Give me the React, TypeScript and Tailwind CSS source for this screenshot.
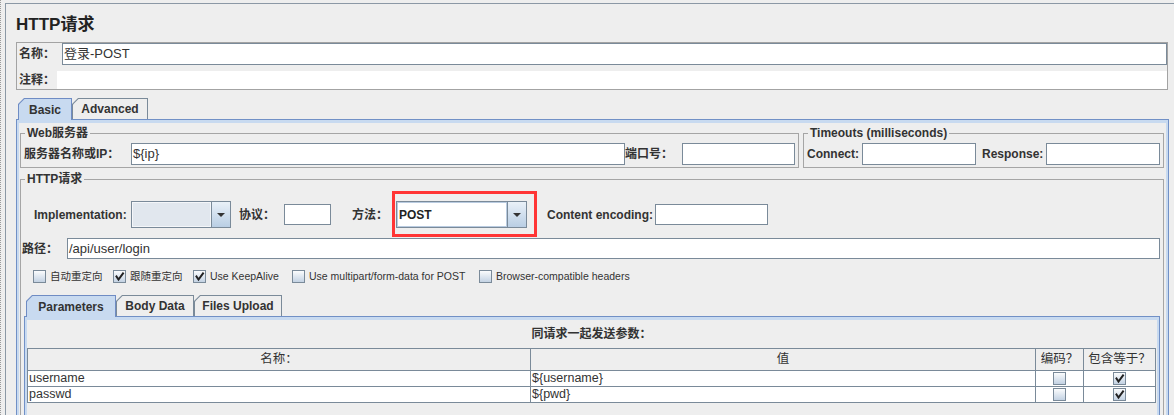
import React from "react";

function Check({ checked }: { checked?: boolean }) {
  return (
    <div className="w-[13px] h-[13px] shrink-0 border border-[#7a8a99] bg-linear-to-b from-[#fbfcfd] to-[#c3d2e3] flex items-center justify-center">
      {checked ? (
        <svg width="11" height="11" viewBox="0 0 11 11">
          <path d="M2.5 5.5 L4.5 8.5 L9 2.5" stroke="#222" strokeWidth="2" fill="none" strokeLinecap="square" />
        </svg>
      ) : null}
    </div>
  );
}

function Arrow() {
  return (
    <div className="w-[19px] shrink-0 border-l border-[#7a8a99] bg-linear-to-b from-[#eaf1f8] to-[#b9cee4] flex items-center justify-center">
      <svg width="8" height="4" viewBox="0 0 8 4">
        <polygon points="0,0 8,0 4,4" fill="#333" />
      </svg>
    </div>
  );
}

function Tab({ label, width, selected }: { label: string; width: string; selected?: boolean }) {
  return (
    <div
      className={
        selected
          ? `relative z-[1] -mb-px h-[22px] bg-[#6f8cc4] pt-px px-px [clip-path:polygon(6px_0,100%_0,100%_100%,0_100%,0_6px)] ${width}`
          : `h-[21px] bg-[#7a8a99] pt-px px-px [clip-path:polygon(6px_0,100%_0,100%_100%,0_100%,0_6px)] ${width}`
      }
    >
      <div
        className={
          selected
            ? "h-full bg-[#c8daf0] flex items-center justify-center font-bold text-[12px] text-[#333] [clip-path:polygon(5.5px_0,100%_0,100%_100%,0_100%,0_5.5px)]"
            : "h-full bg-[#eeeeee] flex items-center justify-center font-bold text-[12px] text-[#333] [clip-path:polygon(5.5px_0,100%_0,100%_100%,0_100%,0_5.5px)]"
        }
      >
        {label}
      </div>
    </div>
  );
}

function CheckItem({ label, checked, width }: { label: string; checked?: boolean; width: string }) {
  return (
    <div className={`flex items-center gap-[4px] ${width}`}>
      <Check checked={checked} />
      <span className="text-[10.5px] text-[#333] whitespace-nowrap leading-[13px]">{label}</span>
    </div>
  );
}

export default function App() {
  return (
    <div className="w-[1174px] h-[415px] overflow-hidden bg-[#eeeeee] flex [font-family:'Liberation_Sans','Noto_Sans_CJK_SC',sans-serif] text-[#333]">
      {/* dotted edge */}
      <div className="w-[5px] h-full border-l border-dotted border-[#9a9a9a]" />
      {/* main panel */}
      <div className="flex-1 mt-[3px] border-t border-l border-[#8b98a5] pl-[10px] pr-[5px] flex flex-col">
        <div className="mt-[7px] h-[28px] leading-[28px] text-[17px] font-bold text-[#222]">HTTP请求</div>

        {/* name / comment box */}
        <div className="mt-[3px] mr-[1px] border border-[#a3a3a3] flex flex-col">
          <div className="h-[22px] flex items-center">
            <div className="w-[45px] pl-[2px] font-bold text-[12px]">名称：</div>
            <div className="flex-1 h-[22px] bg-white border border-[#7a8a99] flex items-center px-[1px] text-[13px] text-[#333]">
              登录-POST
            </div>
          </div>
          <div className="mt-[6px] h-[18px] flex items-center">
            <div className="w-[40px] pl-[2px] font-bold text-[12px]">注释：</div>
            <div className="flex-1 h-[18px] bg-white" />
          </div>
        </div>

        {/* main tabs */}
        <div className="mt-[8px] pl-[2px] flex items-end">
          <Tab label="Basic" width="w-[54px]" selected />
          <Tab label="Advanced" width="w-[76px]" />
        </div>
        <div className="flex-1 border-t border-x border-[#7190c6]">
          <div className="h-full border-t-[3px] border-x-[2px] border-[#c8daf0] pl-[1px] pr-[2px] flex flex-col">
            {/* top fieldsets */}
            <div className="mt-[2px] flex gap-[4px]">
              <fieldset className="flex-1 border border-[#a5a5a5] pl-[3px] pr-[3px] pb-[2px]">
                <legend className="ml-[1px] px-[2px] h-[16px] leading-[16px] font-bold text-[12px]">Web服务器</legend>
                <div className="mt-[2px] h-[22px] flex items-center">
                  <div className="w-[107px] font-bold text-[12px] whitespace-nowrap">服务器名称或IP：</div>
                  <div className="flex-1 h-[22px] bg-white border border-[#7a8a99] flex items-center px-[1px] text-[13px] text-[#333]">
                    {"${ip}"}
                  </div>
                  <div className="w-[57px] font-bold text-[12px] whitespace-nowrap">端口号：</div>
                  <div className="w-[113px] h-[22px] bg-white border border-[#7a8a99]" />
                </div>
              </fieldset>
              <fieldset className="w-[361px] border border-[#a5a5a5] pl-[3px] pr-[3px] pb-[2px]">
                <legend className="ml-[1px] px-[2px] h-[16px] leading-[16px] font-bold text-[12px]">Timeouts (milliseconds)</legend>
                <div className="mt-[2px] h-[22px] flex items-center">
                  <div className="w-[55px] font-bold text-[12px] whitespace-nowrap">Connect:</div>
                  <div className="w-[114px] h-[22px] bg-white border border-[#7a8a99]" />
                  <div className="ml-[6px] w-[64px] font-bold text-[12px] whitespace-nowrap">Response:</div>
                  <div className="w-[114px] h-[22px] bg-white border border-[#7a8a99]" />
                </div>
              </fieldset>
            </div>

            {/* HTTP request fieldset */}
            <fieldset className="mt-[3px] flex-1 border border-b-0 border-[#a5a5a5] min-h-[300px]">
              <legend className="ml-[4px] px-[2px] h-[16px] leading-[16px] font-bold text-[12px]">HTTP请求</legend>

              {/* row 1 */}
              <div className="mt-[14px] h-[27px] pl-[13px] flex items-center">
                <div className="w-[97px] font-bold text-[12px] whitespace-nowrap">Implementation:</div>
                <div className="w-[100px] h-[27px] flex border border-[#7a8a99]">
                  <div className="flex-1 bg-[#e1e7ee] border border-[#f4f6f9]" />
                  <Arrow />
                </div>
                <div className="ml-[8px] w-[45px] font-bold text-[12px] whitespace-nowrap">协议：</div>
                <div className="w-[47px] h-[21px] bg-white border border-[#7a8a99]" />
                <div className="ml-[21px] w-[44px] font-bold text-[12px] whitespace-nowrap">方法：</div>
                <div className="relative w-[131px] h-[27px] flex border border-[#7a8a99]">
                  <div className="flex-1 bg-white border border-[#b9cbe0] flex items-center pl-[1px] font-bold text-[12px] text-[#222]">
                    POST
                  </div>
                  <Arrow />
                  <div className="absolute top-[-11px] left-[-5px] right-[-11px] bottom-[-10px] border-[3px] border-[#ff3535] pointer-events-none" />
                </div>
                <div className="ml-[20px] w-[108px] font-bold text-[12px] whitespace-nowrap">Content encoding:</div>
                <div className="w-[113px] h-[21px] bg-white border border-[#7a8a99]" />
              </div>

              {/* row 2 */}
              <div className="mt-[10px] h-[21px] pl-[1px] pr-[3px] flex items-center">
                <div className="w-[45px] font-bold text-[12px] whitespace-nowrap">路径：</div>
                <div className="flex-1 h-[21px] bg-white border border-[#7a8a99] flex items-center px-[1px] text-[13px] text-[#333]">
                  /api/user/login
                </div>
              </div>

              {/* row 3 */}
              <div className="mt-[11px] h-[13px] pl-[12px] flex items-center">
                <CheckItem label="自动重定向" width="w-[80px]" />
                <CheckItem label="跟随重定向" checked width="w-[80px]" />
                <CheckItem label="Use KeepAlive" checked width="w-[99px]" />
                <CheckItem label="Use multipart/form-data for POST" width="w-[187px]" />
                <CheckItem label="Browser-compatible headers" width="w-[200px]" />
              </div>

              {/* sub tabs */}
              <div className="mt-[12px] ml-[3px] pl-[2px] flex items-end">
                <Tab label="Parameters" width="w-[90px]" selected />
                <Tab label="Body Data" width="w-[78px]" />
                <Tab label="Files Upload" width="w-[88px]" />
              </div>
              <div className="ml-[3px] mr-[3px] border-t border-x border-[#7190c6]">
                <div className="border-t-[3px] border-x-[2px] border-[#c8daf0] pr-[1px]">
                  <div className="h-[28px] flex items-center justify-center font-bold text-[12px]">同请求一起发送参数：</div>
                  <div className="border-t border-x border-[#7a8a99] text-[#333]">
                    <div className="h-[22px] flex border-b border-[#7a8a99] bg-[#eeeeee] text-[12.5px]">
                      <div className="w-[503px] border-r border-[#7a8a99] flex items-center justify-center">名称：</div>
                      <div className="w-[505px] border-r border-[#7a8a99] flex items-center justify-center">值</div>
                      <div className="w-[48px] border-r border-[#7a8a99] flex items-center justify-center">编码？</div>
                      <div className="flex-1 flex items-center justify-center">包含等于？</div>
                    </div>
                    <div className="h-[16px] flex border-b border-[#7a8a99] bg-white text-[12.5px]">
                      <div className="w-[503px] border-r border-[#7a8a99] flex items-center pl-[1px]">username</div>
                      <div className="w-[505px] border-r border-[#7a8a99] flex items-center pl-[1px]">{"${username}"}</div>
                      <div className="w-[48px] border-r border-[#7a8a99] flex items-center justify-center"><Check /></div>
                      <div className="flex-1 flex items-center justify-center"><Check checked /></div>
                    </div>
                    <div className="h-[16px] flex border-b border-[#7a8a99] bg-white text-[12.5px]">
                      <div className="w-[503px] border-r border-[#7a8a99] flex items-center pl-[1px]">passwd</div>
                      <div className="w-[505px] border-r border-[#7a8a99] flex items-center pl-[1px]">{"${pwd}"}</div>
                      <div className="w-[48px] border-r border-[#7a8a99] flex items-center justify-center"><Check /></div>
                      <div className="flex-1 flex items-center justify-center"><Check checked /></div>
                    </div>
                  </div>
                  <div className="h-[60px]" />
                </div>
              </div>
            </fieldset>
          </div>
        </div>
      </div>
    </div>
  );
}
